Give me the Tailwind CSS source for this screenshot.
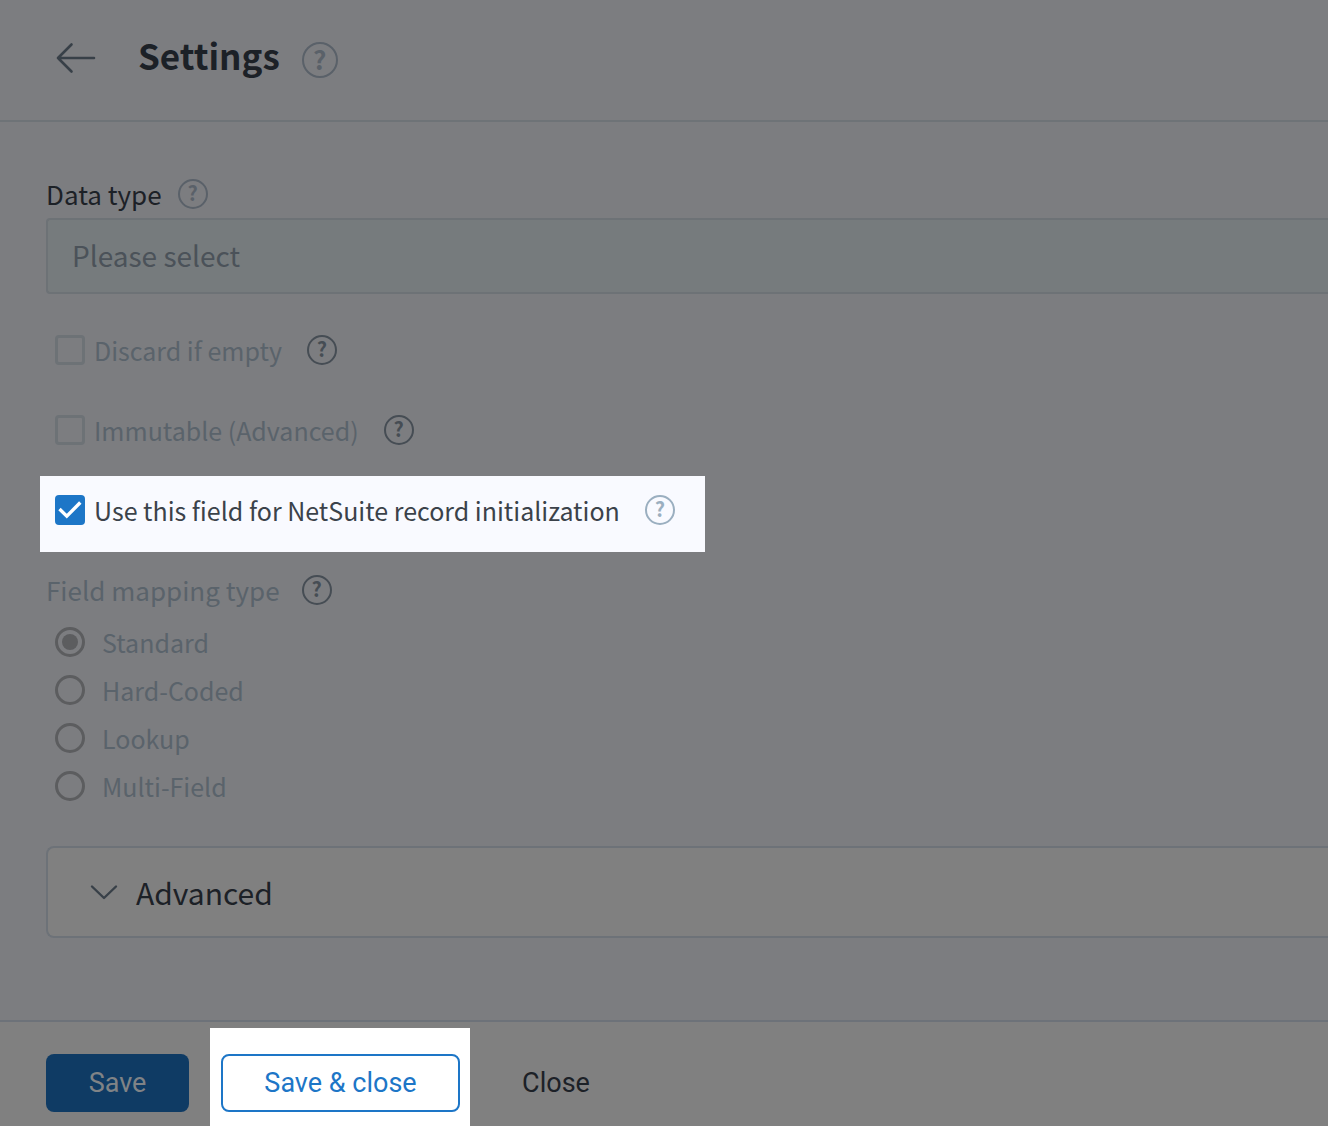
<!DOCTYPE html>
<html lang="en">
<head>
<meta charset="utf-8">
<meta name="viewport" content="width=device-width, initial-scale=1">
<title>Settings</title>
<script src="https://cdn.jsdelivr.net/npm/@tailwindcss/browser@4"></script>
</head>
<body class="flex min-h-screen flex-col overflow-x-hidden bg-[#7c7d80] font-['Noto_Sans_CJK_SC','Noto_Sans',sans-serif] text-[25px] leading-8 text-[#1c2127]">

<header class="flex h-[122px] items-start border-b-2 border-[#6e7377] pt-8 pl-14">
  <button type="button" aria-label="Back" class="flex h-[52px] w-10 items-center text-[#384048]">
    <svg class="h-8 w-10" viewBox="0 0 40 32" fill="none" stroke="currentColor" stroke-width="2.6" stroke-linecap="round" stroke-linejoin="round"><path d="M38 16H2M15.500 2.500L2 16L15.500 29.500"/></svg>
  </button>
  <h1 class="ml-[42px] text-[35px] leading-[46px] font-bold">Settings</h1>
  <button type="button" aria-label="Help with settings" class="mt-[10px] ml-[22px] flex size-9 items-center justify-center rounded-full border-2 border-[#5a6169] pb-[2px] text-[26px] leading-6 font-bold text-[#5a6169]">?</button>
</header>

<main class="flex-1 pt-[52px] pb-[82px] pl-10">
  <div class="flex h-10 items-center gap-4 pl-[6px]">
    <label for="data-type" class="text-[26px]">Data type</label>
    <button type="button" aria-label="Help with data type" class="flex size-[30px] items-center justify-center rounded-full border-2 border-[#5a6169] pb-[2px] text-[20px] leading-5 font-bold text-[#5a6169]">?</button>
  </div>
  <div class="mt-1 pl-[6px]">
    <select id="data-type" class="block h-[76px] w-full appearance-none rounded-l border-2 border-r-0 border-[#6d7276] bg-[#767b7d] pb-[2px] pl-6 text-[28px] leading-10 text-[#4b5259]">
      <option>Please select</option>
    </select>
  </div>

  <div class="mt-[22px] flex flex-col items-start gap-1">
    <div class="flex h-[76px] items-center pr-[30px] pb-2 pl-[15px]">
      <input id="discard" type="checkbox" disabled class="size-[30px] appearance-none rounded-sm border-3 border-[#6d7276]">
      <label for="discard" class="ml-[9px] text-[#5a636b]">Discard if empty</label>
      <button type="button" aria-label="Help with discard if empty" class="ml-[25px] flex size-[30px] items-center justify-center rounded-full border-2 border-[#464d54] pb-[2px] text-[20px] leading-5 font-bold text-[#464d54]">?</button>
    </div>
    <div class="flex h-[76px] items-center pr-[30px] pb-2 pl-[15px]">
      <input id="immutable" type="checkbox" disabled class="size-[30px] appearance-none rounded-sm border-3 border-[#6d7276]">
      <label for="immutable" class="ml-[9px] text-[#5a636b]">Immutable (Advanced)</label>
      <button type="button" aria-label="Help with immutable" class="ml-[25px] flex size-[30px] items-center justify-center rounded-full border-2 border-[#464d54] pb-[2px] text-[20px] leading-5 font-bold text-[#464d54]">?</button>
    </div>
    <div class="flex h-[76px] items-center bg-[#f9faff] pr-[30px] pb-2 pl-[15px]">
      <span class="grid size-[30px]">
        <input id="initialize" type="checkbox" checked class="col-start-1 row-start-1 size-[30px] appearance-none rounded-sm bg-[#1d76c7]">
        <svg class="pointer-events-none col-start-1 row-start-1 size-[30px]" viewBox="0 0 30 30" fill="none" stroke="#fff" stroke-width="3.400" aria-hidden="true"><path d="M4.500 14L11.800 21.200L25.300 7.500"/></svg>
      </span>
      <label for="initialize" class="ml-[9px] text-[#3b424a]">Use this field for NetSuite record initialization</label>
      <button type="button" aria-label="Help with record initialization" class="ml-[25px] flex size-[30px] items-center justify-center rounded-full border-2 border-[#9bafc0] pb-[2px] text-[20px] leading-5 font-bold text-[#9bafc0]">?</button>
    </div>
  </div>

  <fieldset class="mt-[14px]" aria-labelledby="mapping-title">
    <div class="flex h-12 items-center gap-[22px] pl-[6px]">
      <span id="mapping-title" class="text-[26px] text-[#5a636b]">Field mapping type</span>
      <button type="button" aria-label="Help with field mapping type" class="flex size-[30px] items-center justify-center rounded-full border-2 border-[#464d54] pb-[2px] text-[20px] leading-5 font-bold text-[#464d54]">?</button>
    </div>
    <div class="mt-1 pl-[15px] text-[#5a636b]">
      <div class="flex h-12 items-center gap-[17px]">
        <input id="standard" name="mapping" type="radio" checked disabled class="size-[30px] appearance-none rounded-full border-3 border-[#5c5d5f] bg-clip-content p-1 checked:bg-[#5c5d5f]">
        <label for="standard">Standard</label>
      </div>
      <div class="flex h-12 items-center gap-[17px]">
        <input id="hard" name="mapping" type="radio" disabled class="size-[30px] appearance-none rounded-full border-3 border-[#5c5d5f]">
        <label for="hard">Hard-Coded</label>
      </div>
      <div class="flex h-12 items-center gap-[17px]">
        <input id="lookup" name="mapping" type="radio" disabled class="size-[30px] appearance-none rounded-full border-3 border-[#5c5d5f]">
        <label for="lookup">Lookup</label>
      </div>
      <div class="flex h-12 items-center gap-[17px]">
        <input id="multi" name="mapping" type="radio" disabled class="size-[30px] appearance-none rounded-full border-3 border-[#5c5d5f]">
        <label for="multi">Multi-Field</label>
      </div>
    </div>
  </fieldset>

  <div class="mt-9 pl-[6px]">
    <button type="button" aria-expanded="false" class="flex h-[92px] w-full items-center gap-[18px] rounded-l-lg border-2 border-r-0 border-[#6d7278] bg-[#808080] pl-[42px] text-[30px] leading-10">
      <svg class="h-4 w-7" viewBox="0 0 28 16" fill="none" stroke="#384048" stroke-width="2.400" stroke-linecap="round" stroke-linejoin="round" aria-hidden="true"><path d="M2 2.500L14 14L26 2.500"/></svg>
      Advanced
    </button>
  </div>
</main>

<footer class="flex h-[106px] items-stretch border-t-2 border-[#6d7279] bg-[#808080] pl-[46px] font-[Roboto,sans-serif] text-[27px] leading-8">
  <button type="button" class="mt-8 h-[58px] w-[143px] rounded-lg bg-[#0f3b64] text-[#808386]">Save</button>
  <div class="mt-[6px] ml-[21px] w-[260px] bg-white pt-[26px] pr-[10px] pl-[11px]">
    <button type="button" class="h-[58px] w-full rounded-lg border-2 border-[#1d76c7] text-[#1d76c7]">Save &amp; close</button>
  </div>
  <button type="button" class="mt-8 ml-[10px] h-[58px] w-[152px] rounded-lg">Close</button>
</footer>

</body>
</html>
